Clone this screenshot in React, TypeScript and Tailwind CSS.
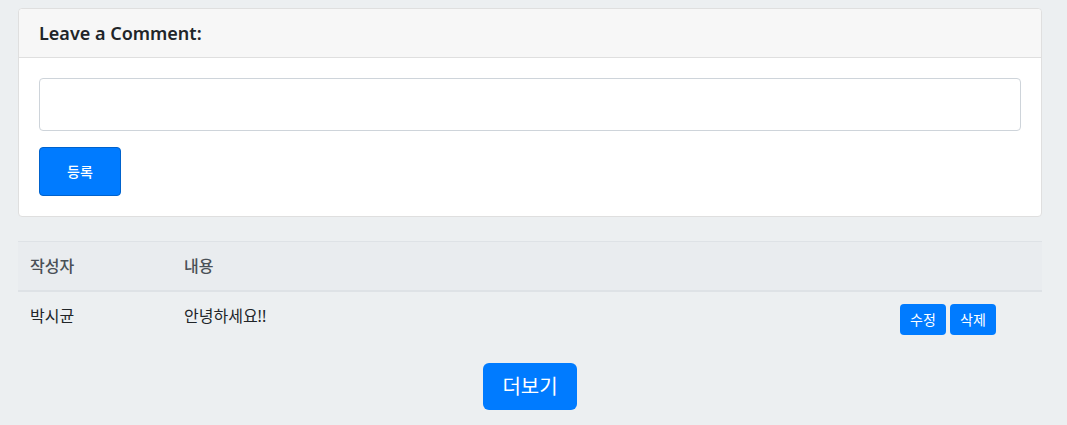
const rows = [{ writer: "박시균", content: "안녕하세요!!" }];

export default function App() {
  return (
    <div
      className="min-h-screen bg-[#eceff1] pl-[18px] pr-[25px] pt-2 text-[#212529]"
      style={{ fontFamily: '"Noto Sans", "Noto Sans CJK KR", sans-serif' }}
    >
      {/* Comment form */}
      <div className="rounded border border-[#dfdfdf] bg-white">
        <div className="border-b border-[#dfdfdf] bg-[#f7f7f7] px-5 py-3 rounded-t">
          <h5 className="text-[18px] leading-6 font-semibold">Leave a Comment:</h5>
        </div>
        <div className="p-5">
          <textarea
            className="block h-[53px] w-full resize-none rounded border border-[#ced4da] px-3 py-1.5 outline-none"
            rows={1}
          />
          <button className="mt-4 flex h-[49px] w-[82px] items-center justify-center rounded border border-[#0062cc] bg-[#007bff] text-[14px] font-medium text-white">
            등록
          </button>
        </div>
      </div>

      {/* Comment list */}
      <div className="mt-6 text-[16px] leading-6">
        <div className="flex border-t border-b-2 border-[#dee2e6] bg-[#e9ecef] text-[#495057]">
          <div className="w-[154px] p-3 font-medium">작성자</div>
          <div className="w-[716px] p-3 font-medium">내용</div>
          <div className="flex-1 p-3"></div>
        </div>
        {rows.map((r) => (
          <div key={r.writer} className="flex">
            <div className="w-[154px] p-3">{r.writer}</div>
            <div className="w-[716px] p-3">{r.content}</div>
            <div className="flex flex-1 gap-1 p-3">
              <button className="h-[31px] w-[46px] rounded bg-[#007bff] text-[14px] leading-[21px] text-white">수정</button>
              <button className="h-[31px] w-[46px] rounded bg-[#007bff] text-[14px] leading-[21px] text-white">삭제</button>
            </div>
          </div>
        ))}
        <div className="mt-4 flex justify-center">
          <button className="h-[47px] w-[94px] rounded-md bg-[#007bff] text-[20px] leading-[30px] text-white">더보기</button>
        </div>
      </div>
    </div>
  );
}
